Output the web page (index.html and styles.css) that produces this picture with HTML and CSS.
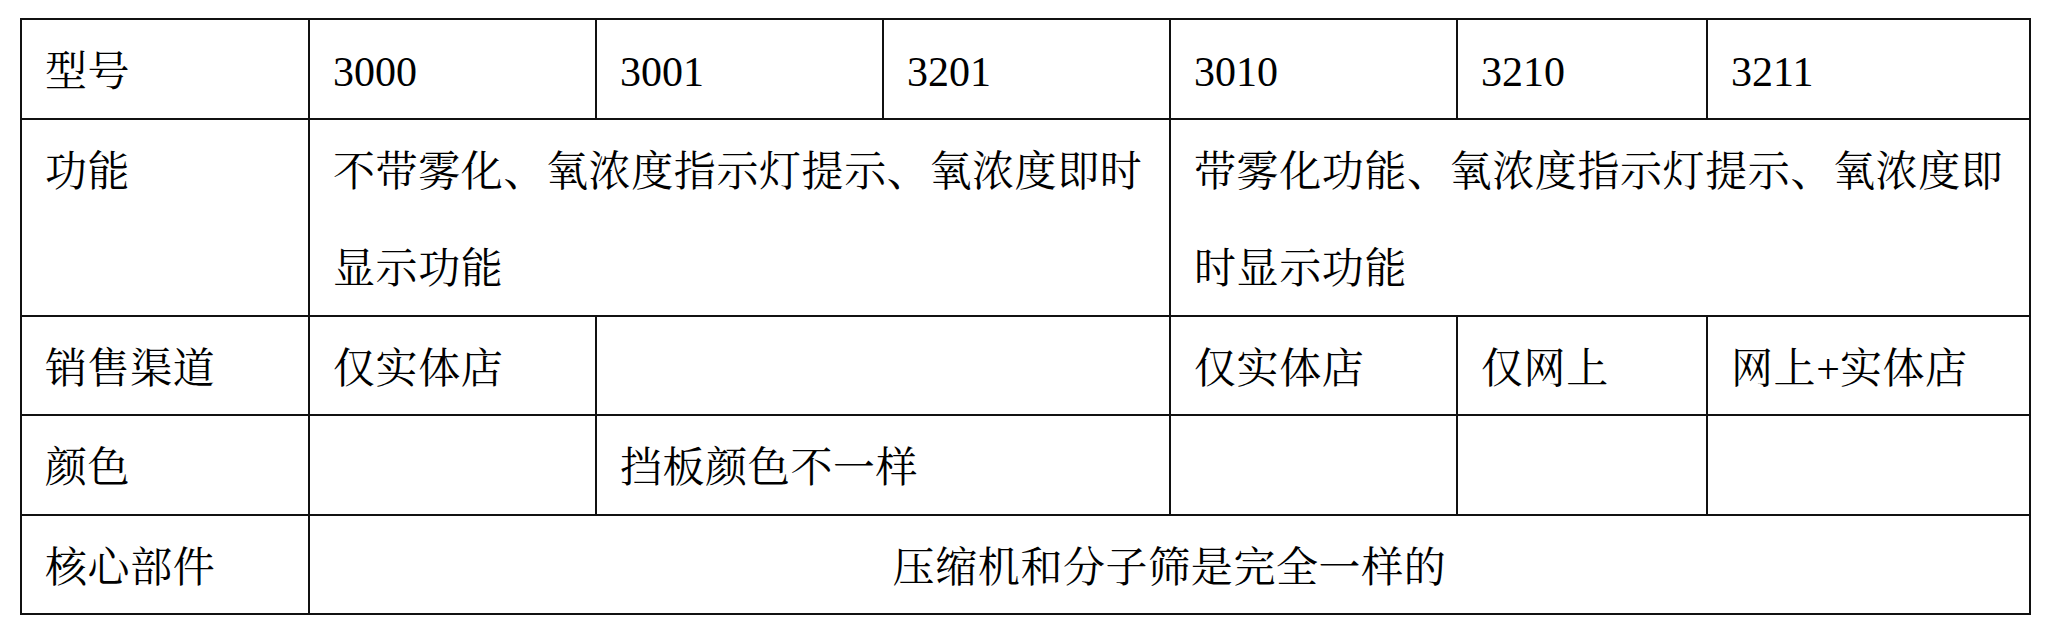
FILE: index.html
```html
<!DOCTYPE html>
<html>
<head>
<meta charset="utf-8">
<title>型号对比</title>
<link rel="stylesheet" href="styles.css">
</head>
<body>
<table class="spec">
  <colgroup>
    <col class="c-label">
    <col class="c-std">
    <col class="c-std">
    <col class="c-std">
    <col class="c-std">
    <col class="c-narrow">
    <col class="c-wide">
  </colgroup>
  <tbody>
    <tr>
      <td>型号</td>
      <td><span class="num">3000</span></td>
      <td><span class="num">3001</span></td>
      <td><span class="num">3201</span></td>
      <td><span class="num">3010</span></td>
      <td><span class="num">3210</span></td>
      <td><span class="num">3211</span></td>
    </tr>
    <tr>
      <td>功能</td>
      <td colspan="3">不带雾化、氧浓度指示灯提示、氧浓度即时显示功能</td>
      <td colspan="3">带雾化功能、氧浓度指示灯提示、氧浓度即时显示功能</td>
    </tr>
    <tr>
      <td>销售渠道</td>
      <td>仅实体店</td>
      <td colspan="2"></td>
      <td>仅实体店</td>
      <td>仅网上</td>
      <td>网上<span class="num">+</span>实体店</td>
    </tr>
    <tr>
      <td>颜色</td>
      <td></td>
      <td colspan="2">挡板颜色不一样</td>
      <td></td>
      <td></td>
      <td></td>
    </tr>
    <tr>
      <td>核心部件</td>
      <td colspan="6" class="center">压缩机和分子筛是完全一样的</td>
    </tr>
  </tbody>
</table>
</body>
</html>
```
FILE: styles.css
```css
html, body {
  margin: 0;
  background: #ffffff;
}

body {
  padding: 18px 0 0 20px;
}

.spec {
  border-collapse: collapse;
  table-layout: fixed;
  width: 2009px;
  font-family: "Noto Serif CJK SC", "Noto Sans CJK SC", sans-serif;
  font-size: 42px;
  font-weight: normal;
  color: #000000;
}

.num {
  font-family: "Liberation Serif", "DejaVu Serif", serif;
  letter-spacing: 0;
  line-height: 1;
}

.c-label { width: 288px; }
.c-std { width: 287px; }
.c-narrow { width: 250px; }
.c-wide { width: 323px; }

.spec td {
  border: 2px solid #111111;
  padding: 0 8px 0 23px;
  height: 97.5px;
  line-height: 97.5px;
  vertical-align: top;
  letter-spacing: 0.6px;
  text-align: left;
}

.spec td.center {
  text-align: center;
  padding: 0;
}
```
